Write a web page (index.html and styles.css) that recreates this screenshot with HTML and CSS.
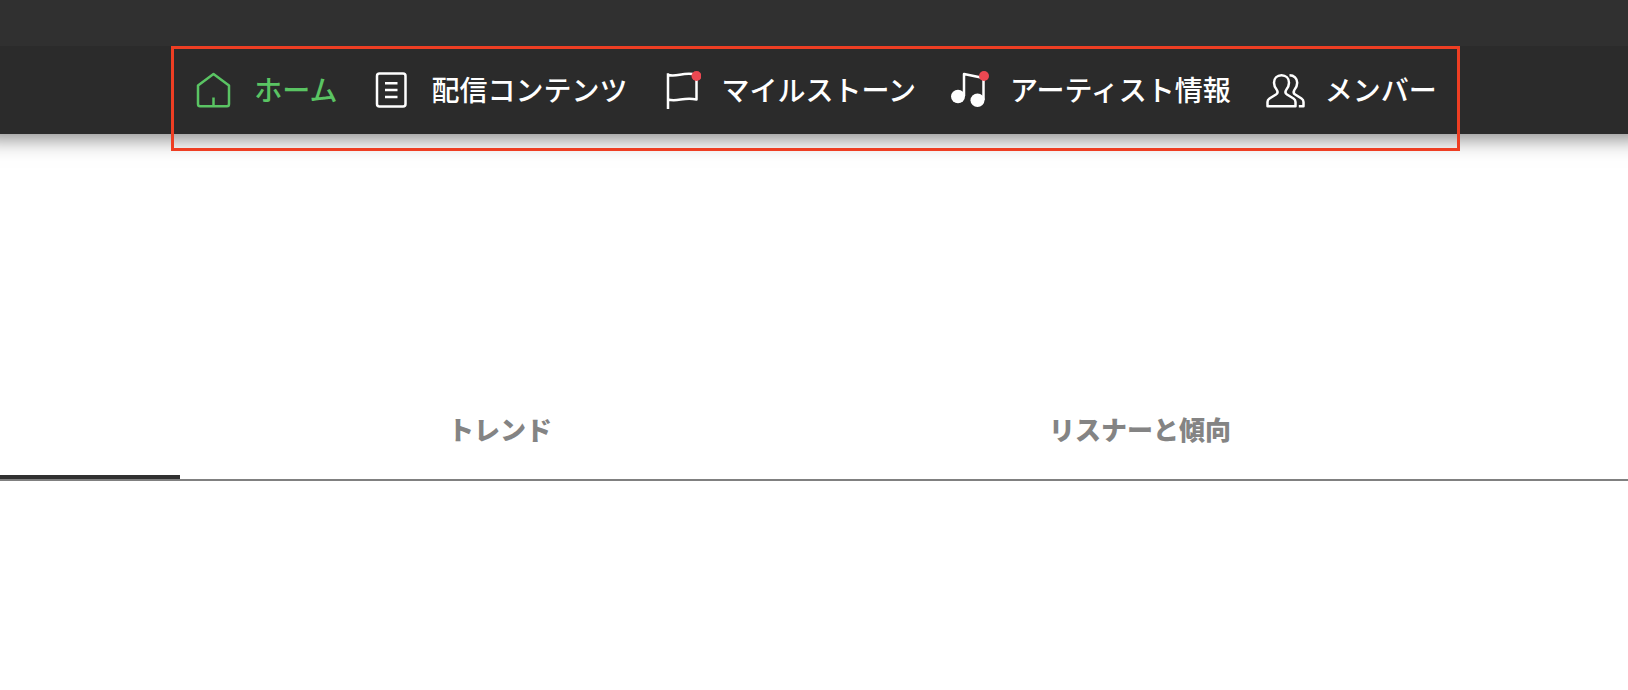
FILE: index.html
```
<!DOCTYPE html>
<html lang="ja">
<head>
    <meta charset="UTF-8">
    <meta name="viewport" content="width=device-width, initial-scale=1.0">
    <title>ホーム</title>
    <link rel="stylesheet" href="styles.css">
</head>
<body>
    <header class="header">
        <div class="header-top"></div>
        <nav class="nav">
            <ul class="nav-list">
                <li>
                    <a class="nav-link active" href="#home" aria-current="page">
                        <svg class="icon" viewBox="0 0 40 40" aria-hidden="true">
                            <path d="M19.500 4 L4 15.500 V34 Q4 36.300 6 36.300 H33 Q35 36.300 35 34 V15.500 Z M19.500 27.500 V36"/>
                        </svg>
                        <span>ホーム</span>
                    </a>
                </li>
                <li>
                    <a class="nav-link" href="#contents">
                        <svg class="icon" viewBox="0 0 40 40" aria-hidden="true">
                            <rect x="6" y="3.500" width="28.500" height="33" rx="2.500"/>
                            <path d="M14 13.300 H26.500 M14 20 H26.500 M14 27 H26.500"/>
                        </svg>
                        <span>配信コンテンツ</span>
                    </a>
                </li>
                <li>
                    <a class="nav-link" href="#milestone">
                        <svg class="icon" viewBox="0 0 40 40" aria-hidden="true">
                            <path d="M7 3.300 V39 M7 5 C17 7.500 21 1.500 35.500 4.500 V29.500 C22 26.500 17 32.500 7 29.500"/>
                            <circle class="dot" cx="35.500" cy="6" r="5"/>
                        </svg>
                        <span>マイルストーン</span>
                    </a>
                </li>
                <li>
                    <a class="nav-link" href="#artist">
                        <svg class="icon" viewBox="0 0 40 40" aria-hidden="true">
                            <path d="M14 26 V4 L33.500 8 V30"/>
                            <ellipse class="note" cx="8" cy="26.500" rx="7" ry="6.700"/>
                            <ellipse class="note" cx="27.500" cy="30.300" rx="7" ry="6.700"/>
                            <circle class="dot" cx="34" cy="6" r="5"/>
                        </svg>
                        <span>アーティスト情報</span>
                    </a>
                </li>
                <li>
                    <a class="nav-link" href="#member">
                        <svg class="icon" viewBox="0 0 40 40" aria-hidden="true">
                            <path d="M16.500 5.300 C12 5.300 9 8.500 9 12.800 C9 15.800 10 18 12 20.300 C13 22 12.500 23.500 11 24.500 L4.500 28.500 Q2.500 29.800 2.500 32 V36.300 H30.500 V32 Q30.500 29.800 28.500 28.500 L22 24.500 C20.500 23.500 20 22 21 20.300 C23 18 24 15.800 24 12.800 C24 8.500 21 5.300 16.500 5.300 Z"/>
                            <path d="M24.500 5.300 C29 5.300 32.200 8.500 32.200 12.800 C32.200 15.800 31.200 18 29.200 20.300 C28.200 22 28.700 23.500 30.200 24.500 L36.500 28.500 Q38.500 29.800 38.500 32 V36.300 H33.800"/>
                        </svg>
                        <span>メンバー</span>
                    </a>
                </li>
            </ul>
        </nav>
    </header>

    <main>
        <div class="tabs" role="tablist">
            <button class="tab" role="tab" aria-selected="true" aria-label="概要"></button>
            <button class="tab" role="tab" aria-selected="false">トレンド</button>
            <button class="tab" role="tab" aria-selected="false">リスナーと傾向</button>
        </div>
    </main>
</body>
</html>
```
FILE: styles.css
```
body {
    margin: 0;
    background-color: #fff;
    font-family: "Noto Sans CJK JP", sans-serif;
}

.header {
    background-color: #2b2b2b;
    box-shadow: 0 -16px 20px 20px rgba(0, 0, 0, 0.5);
}

.header-top {
    height: 46px;
    background-color: #303030;
}

.nav {
    display: flex;
    justify-content: center;
    height: 88px;
    padding-left: 3px;
}

.nav-list {
    position: relative;
    display: flex;
    align-items: center;
    gap: 34px;
    margin: 0;
    padding: 0 23px;
    list-style: none;
}

/* frame around the menu, hangs below the header */
.nav-list::after {
    content: "";
    position: absolute;
    top: 0;
    right: 0;
    bottom: -17px;
    left: 0;
    border: 3px solid #ee3e23;
    pointer-events: none;
}

.nav-link {
    display: flex;
    align-items: center;
    gap: 20px;
    color: #fff;
    font-size: 28px;
    font-weight: 500;
    line-height: 36px;
    text-decoration: none;
    white-space: nowrap;
}

.nav-link span {
    padding-bottom: 3px;
}

.nav-link.active {
    color: #5ac463;
}

.icon {
    flex-shrink: 0;
    width: 40px;
    height: 40px;
    fill: none;
    stroke: currentColor;
    stroke-width: 2.5;
    stroke-linejoin: round;
}

.icon .note {
    fill: currentColor;
    stroke: none;
}

.icon .dot {
    fill: #ec4852;
    stroke: none;
}

.tabs {
    display: grid;
    grid-template-columns: 180px 1fr 1fr 168px;
    margin-top: 245px;
    border-bottom: 2px solid #808080;
}

.tab {
    height: 100px;
    padding: 2px 0 0;
    border: none;
    border-bottom: 4px solid transparent;
    background: none;
    color: #848484;
    font-family: inherit;
    font-size: 26px;
    font-weight: 900;
    cursor: pointer;
}

.tab[aria-selected="true"] {
    border-bottom-color: #303030;
}
```
